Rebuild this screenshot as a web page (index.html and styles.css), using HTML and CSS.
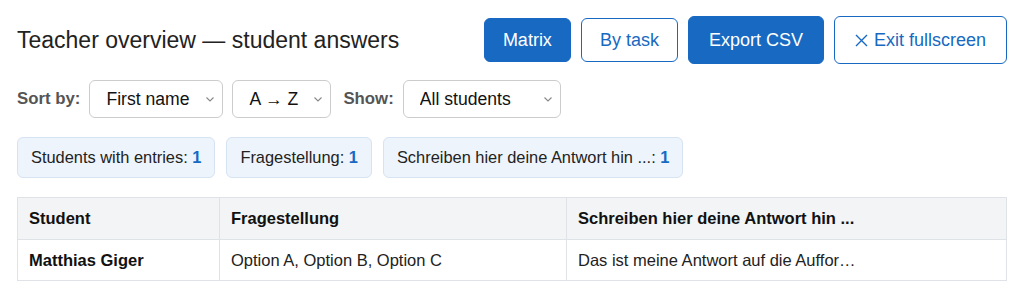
FILE: index.html
```html
<!DOCTYPE html>
<html lang="en">
<head>
    <meta charset="utf-8" />
    <title>Teacher overview</title>
    <link rel="stylesheet" href="styles.css">
</head>
<body>
    <div class="page">
        <div class="header">
            <h1 class="title">Teacher overview — student answers</h1>
            <div class="actions">
                <button class="btn btn_primary">Matrix</button>
                <button class="btn btn_outline">By task</button>
                <button class="btn btn_primary btn_big">Export CSV</button>
                <button class="btn btn_outline btn_big">
                    <svg class="x" width="13" height="13" viewBox="0 0 13 13"><path d="M1 1L12 12M12 1L1 12" stroke="currentColor" stroke-width="1.4" fill="none"/></svg>Exit fullscreen
                </button>
            </div>
        </div>

        <div class="controls">
            <label class="ctl_label">Sort by:</label>
            <select class="sel sel_name">
                <option>First name</option>
            </select>
            <select class="sel sel_dir">
                <option>A → Z</option>
            </select>
            <label class="ctl_label ctl_gap">Show:</label>
            <select class="sel sel_show">
                <option>All students</option>
            </select>
        </div>

        <div class="chips">
            <div class="chip">Students with entries: <b>1</b></div>
            <div class="chip">Fragestellung: <b>1</b></div>
            <div class="chip">Schreiben hier deine Antwort hin ...: <b>1</b></div>
        </div>

        <table class="grid">
            <thead>
                <tr>
                    <th class="col_1">Student</th>
                    <th class="col_2">Fragestellung</th>
                    <th>Schreiben hier deine Antwort hin ...</th>
                </tr>
            </thead>
            <tbody>
                <tr>
                    <td class="name">Matthias Giger</td>
                    <td>Option A, Option B, Option C</td>
                    <td>Das ist meine Antwort auf die Auffor…</td>
                </tr>
            </tbody>
        </table>
    </div>
</body>
</html>
```

FILE: styles.css
```css
body {
    margin: 0;
    font-family: "Liberation Sans", Arial, sans-serif;
    color: #222;
    background: #fff;
}

.page {
    padding: 16px 17px;
}

.header {
    display: flex;
    justify-content: space-between;
    align-items: center;
    height: 48px;
}

.title {
    margin: 0;
    font-size: 23px;
    font-weight: normal;
    color: #222;
}

.actions {
    display: flex;
    align-items: center;
    gap: 10px;
}

.btn {
    display: flex;
    align-items: center;
    font-family: inherit;
    font-size: 18px;
    height: 44px;
    padding: 0 18px;
    border-radius: 6px;
    cursor: pointer;
}

.btn_big {
    height: 48px;
    padding: 0 20px;
}

.btn_primary {
    background: #1769c2;
    border: 1px solid #1769c2;
    color: #fff;
}

.btn_outline {
    background: #fff;
    border: 1px solid #1769c2;
    color: #1769c2;
}

.x {
    margin-right: 6px;
}

.controls {
    display: flex;
    align-items: center;
    gap: 9px;
    margin-top: 16px;
}

.ctl_label {
    font-size: 16.8px;
    font-weight: bold;
    color: #555;
}

.ctl_gap {
    margin-left: 3px;
}

.sel {
    appearance: none;
    font-family: inherit;
    font-size: 17.6px;
    color: #111;
    height: 38px;
    padding: 0 6px 0 16px;
    border: 1px solid #ccc;
    border-radius: 6px;
    background: #fff url("data:image/svg+xml,%3Csvg xmlns='http://www.w3.org/2000/svg' width='8' height='5' viewBox='0 0 8 5'%3E%3Cpath d='M0.5 0.5L4 4L7.5 0.5' stroke='%23888' stroke-width='1.1' fill='none'/%3E%3C/svg%3E") no-repeat right 8px center;
}

.sel_name {
    width: 134px;
}

.sel_dir {
    width: 99px;
}

.sel_show {
    width: 158px;
}

.chips {
    display: flex;
    gap: 11px;
    margin-top: 19px;
}

.chip {
    height: 41px;
    box-sizing: border-box;
    padding: 0 13px;
    display: flex;
    align-items: center;
    white-space: pre;
    font-size: 16.4px;
    color: #222;
    background: #eef4fb;
    border: 1px solid #d5e3f2;
    border-radius: 6px;
}

.chip b {
    color: #1769c2;
}

.grid {
    width: 100%;
    margin-top: 19px;
    border-collapse: collapse;
    font-size: 16.5px;
}

.grid th,
.grid td {
    text-align: left;
    padding: 0 11px;
    height: 40px;
    border: 1px solid #dfe3e8;
}

.grid th {
    background: #f3f4f6;
    font-weight: bold;
    color: #111;
    height: 41px;
}

.col_1 {
    width: 179px;
}

.col_2 {
    width: 324px;
}

.name {
    font-weight: bold;
    color: #111;
}
```
